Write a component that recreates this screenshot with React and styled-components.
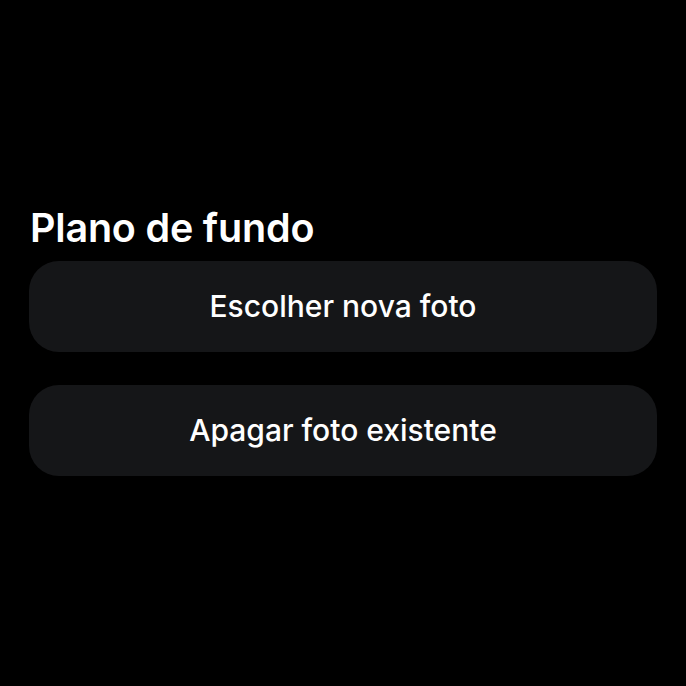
import styled, { createGlobalStyle } from "styled-components";

const GlobalStyle = createGlobalStyle`
  html, body {
    margin: 0;
    padding: 0;
    background: #000;
  }
  body {
    font-family: Inter, "Noto Sans", sans-serif;
    -webkit-font-smoothing: antialiased;
  }
`;

const Screen = styled.div`
  width: 686px;
  height: 686px;
  background: #000;
  display: flex;
  flex-direction: column;
  justify-content: center;
  padding: 0 29px;
  box-sizing: border-box;
`;

const Section = styled.div`
  display: flex;
  flex-direction: column;
  margin-top: -10px;
`;

const Title = styled.h2`
  margin: 3px 0 9px 1px;
  color: #fff;
  font-size: 39.5px;
  font-weight: 600;
  letter-spacing: -0.2px;
  line-height: 48px;
`;

const List = styled.div`
  display: flex;
  flex-direction: column;
  gap: 33px;
`;

const Button = styled.button`
  height: 91px;
  border: none;
  border-radius: 30px;
  background: #151618;
  color: #fff;
  font-family: Inter, "Noto Sans", sans-serif;
  font-size: 30px;
  font-weight: 500;
  cursor: pointer;
`;

export default function App() {
  return (
    <>
      <GlobalStyle />
      <Screen>
        <Section>
          <Title>Plano de fundo</Title>
          <List>
            <Button>Escolher nova foto</Button>
            <Button>Apagar foto existente</Button>
          </List>
        </Section>
      </Screen>
    </>
  );
}
